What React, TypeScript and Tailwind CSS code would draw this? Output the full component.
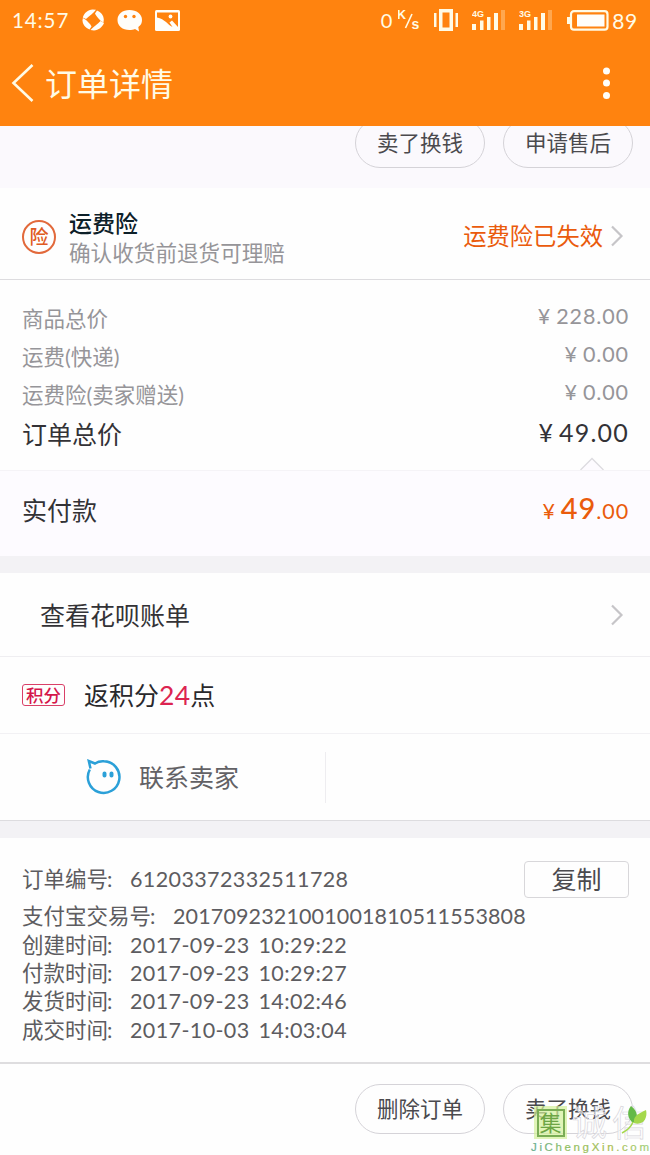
import type { ReactNode } from "react";

function Chevron() {
  return (
    <svg width="14" height="22" viewBox="0 0 14 22" fill="none" stroke="#c6c5c8" strokeWidth="2.2">
      <path d="M2 1.5 11.5 11 2 20.5" />
    </svg>
  );
}

function Signal({ label }: { label: string }) {
  return (
    <svg width="34" height="22" viewBox="0 0 34 22" fill="#fffbe6">
      <text x="0" y="8" fontSize="9" fontWeight="700" fontFamily="Liberation Sans, sans-serif" textLength="12">
        {label}
      </text>
      <rect x="0" y="15" width="4" height="6" />
      <rect x="8" y="11.500" width="3.5" height="9.500" />
      <rect x="15" y="8" width="3.5" height="13" />
      <rect x="22" y="4" width="4" height="17" />
      <rect x="29" y="1" width="4" height="20" opacity=".3" />
    </svg>
  );
}

function StatusBar() {
  return (
    <div className="flex h-10 items-center pl-3 text-[#fffbe6]">
      <span className="w-[57px] text-[20.500px] tracking-[0.900px]">14:57</span>
      <svg className="ml-[13px]" width="23" height="22" viewBox="0 0 23 22" fill="#fffefa">
        <path d="M.8 8.500C2 4 6 .8 10.500.5L14 .8C12 4 7 7 4 10Z" />
        <path d="M15 1.500c4 1.500 6.500 5 6.800 9l-.3 3C18 12 14.500 7.500 13 4.500Z" />
        <path d="M22 14c-1.500 4-5.500 7.300-10 7.500l-3.500-.4C11 18 16 15 18.500 12Z" />
        <path d="M7.500 20.500C3.500 19 .7 15.500.5 11.500l.4-2.500C4 10.500 8 14.500 9.500 17.500Z" />
      </svg>
      <svg className="ml-3" width="26" height="23" viewBox="0 0 26 23">
        <path d="M12.500 1C5.500 1 .5 5 .5 11s5 10 12 10c2 0 4-.3 5.500-1l4 2.500-.7-4.500C24 16 25 14 25 11 25 5 19.500 1 12.500 1Z" fill="#fffefa" />
        <circle cx="8.500" cy="7.500" r="1.700" fill="#ff830f" />
        <circle cx="17" cy="7.500" r="1.700" fill="#ff830f" />
      </svg>
      <svg className="ml-3" width="25" height="21" viewBox="0 0 25 21">
        <rect x="0" y="0" width="25" height="21" rx="1.500" fill="#fffefa" />
        <path d="M2 2.500h21v14.500l-6-6.500-2.500 2 3 4.500C13 15 10 9 2 7.500Z" fill="#ff830f" />
        <circle cx="15.500" cy="6.500" r="1.900" fill="#fffefa" />
      </svg>
      <span className="ml-auto text-[20px]">0</span>
      <svg className="ml-[6px]" width="24" height="24" viewBox="0 0 24 24" fill="#fffbe6" fontFamily="Liberation Sans, sans-serif" fontWeight="700">
        <text x="-1" y="10.500" fontSize="12.500">K</text>
        <path d="M7.500 20 14 6" stroke="#fffbe6" strokeWidth="1.600" />
        <text x="13.500" y="20.500" fontSize="14">s</text>
      </svg>
      <svg className="ml-[12px]" width="24" height="22" viewBox="0 0 24 22" fill="#fffbe6">
        <path d="M0 4h2.500v14H0zM21.500 4H24v14h-2.500zM5 0h14v22H5zM8.500 3.500v15h7v-15z" fillRule="evenodd" />
      </svg>
      <div className="ml-[14px] flex gap-[13px]">
        <Signal label="4G" />
        <Signal label="3G" />
      </div>
      <svg className="ml-[14px]" width="42" height="21" viewBox="0 0 42 21">
        <rect x="4" y="1.200" width="36.500" height="18.500" rx="3" fill="none" stroke="#fffbe6" strokeWidth="2.200" />
        <path d="M0 7h3v7H0z" fill="#fffbe6" />
        <rect x="10" y="4.500" width="27.500" height="12" fill="#fffefa" />
      </svg>
      <span className="ml-[3px] mr-[12px] text-[21px] tracking-[0.700px]">89</span>
    </div>
  );
}

function Pill({ children }: { children: ReactNode }) {
  return (
    <button className="h-[50px] w-[130px] shrink-0 rounded-full border border-[#d5d3d8] pt-[2px] text-[21.500px] text-[#4b4a4e]">
      {children}
    </button>
  );
}

function PriceRow({ label, value }: { label: string; value: string }) {
  return (
    <div className="flex h-[38px] items-center justify-between text-[21.500px] text-[#969599]">
      <span className="pt-[2px]">{label}</span>
      <span className="relative -top-[2px] flex tracking-[0.900px]">
        <span className="mr-[5px]">¥</span>
        {value}
      </span>
    </div>
  );
}

function InfoRow({ label, value, tight = false }: { label: string; value: string; tight?: boolean }) {
  return (
    <div className="flex h-[28.300px] items-center text-[21.500px] text-[#5d5c60]">
      <span>{label}</span>
      <span className="-ml-[1px] inline-block w-[23px]">:</span>
      <span className={tight ? "tracking-[0.130px]" : "tracking-[0.380px] [word-spacing:3px]"}>{value}</span>
    </div>
  );
}

export default function App() {
  return (
    <div className="flex h-[1155px] w-[650px] flex-col overflow-hidden bg-[#fefefe] font-[Lato,'Noto_Sans_CJK_SC',sans-serif] leading-none">
      <header className="h-[126px] shrink-0 bg-[#ff830f]">
        <StatusBar />
        <div className="flex h-[86px] items-center pl-[11px] text-[#fffbe6]">
          <svg width="24" height="40" viewBox="0 0 24 40" fill="none" stroke="#fffbe6" strokeWidth="2.600">
            <path d="M21.500 2 2.500 20l19 18" />
          </svg>
          <h1 className="ml-[10px] pt-px text-[32px]">订单详情</h1>
          <svg className="ml-auto mr-[39px]" width="9" height="34" viewBox="0 0 9 34" fill="#fffefa">
            <circle cx="4.500" cy="5" r="3.500" />
            <circle cx="4.500" cy="17" r="3.500" />
            <circle cx="4.500" cy="29.500" r="3.500" />
          </svg>
        </div>
      </header>

      <section className="flex h-[62px] shrink-0 items-end justify-end gap-[18px] overflow-hidden bg-[#fbf9fd] pb-5 pr-[17px]">
        <Pill>卖了换钱</Pill>
        <Pill>申请售后</Pill>
      </section>

      <section className="flex h-[92px] shrink-0 items-center border-b border-[#dddcdf] pl-[22px] pr-[26px]">
        <div className="mt-[6px] flex size-[34px] items-center justify-center rounded-full border-2 border-[#e2693b] text-[19px] font-medium text-[#e05a22]">
          险
        </div>
        <div className="ml-[13px] mt-[9px] flex flex-col gap-[8px]">
          <span className="text-[23px] font-medium text-[#0d2029]">运费险</span>
          <span className="text-[21.600px] text-[#969599]">确认收货前退货可理赔</span>
        </div>
        <span className="ml-auto mr-[7px] mt-[6px] text-[23.300px] text-[#ea5b0c]">运费险已失效</span>
        <span className="mt-1">
          <Chevron />
        </span>
      </section>

      <section className="relative h-[190px] shrink-0 pl-[22px] pr-[21px] pt-5">
        <PriceRow label="商品总价" value="228.00" />
        <PriceRow label="运费(快递)" value="0.00" />
        <PriceRow label="运费险(卖家赠送)" value="0.00" />
        <div className="flex h-10 items-center justify-between text-[25px] text-[#333236]">
          <span>订单总价</span>
          <span className="relative -top-[2px] flex tracking-[1.200px]">
            <span className="mr-[5px]">¥</span>49.00
          </span>
        </div>
        <svg className="absolute bottom-0 left-[580px]" width="24" height="13" viewBox="0 0 24 13" fill="#fdfbff" stroke="#dcdbdf" strokeWidth="1.300">
          <path d="M.5 13 12 1.500 23.500 13" />
        </svg>
      </section>

      <section className="flex h-[86px] shrink-0 items-center justify-between border-t border-[#f5f3f7] bg-[#fdfbff] pl-[22px] pr-[21px] text-[#333236]">
        <span className="relative -top-[3px] text-[25px]">实付款</span>
        <span className="relative -top-[6px] flex items-baseline text-[21.500px] tracking-[0.900px] text-[#ea5b0c]">
          <span className="mr-[5px]">¥</span>
          <span className="text-[29px] font-medium">49</span>.00
        </span>
      </section>

      <div className="h-[17px] shrink-0 bg-[#f3f2f5]" />

      <section className="flex h-[84px] shrink-0 items-center justify-between border-b border-[#efeef1] pl-[40px] pr-[26px] text-[25px] text-[#333236]">
        <span className="pt-[2px]">查看花呗账单</span>
        <Chevron />
      </section>

      <section className="flex h-[77px] shrink-0 items-center border-b border-[#f2f1f4] pl-[22px]">
        <span className="flex h-[22px] w-[43px] items-center justify-center rounded-[3px] border border-[#d94068] pt-px text-[17.500px] font-medium text-[#d5174b]">
          积分
        </span>
        <span className="ml-[19px] text-[25px] text-[#29282c]">
          返积分<span className="text-[26.500px] tracking-[0.300px] text-[#dc2450]">24</span>点
        </span>
      </section>

      <section className="flex h-[87px] shrink-0 items-center border-b border-[#dddcdf]">
        <div className="flex h-[51px] w-[326px] items-center border-r border-[#eeedf0] pl-[86px]">
          <svg width="36" height="36" viewBox="0 0 36 36" fill="none" stroke="#2ba0d8" strokeWidth="2.500">
            <path d="M4.500 9.500 2.800 2 9 4.500C12 2.600 15 2 18 2.300A15.800 15.800 0 1 1 3.800 10.500" />
            <path d="M18.500 14.500v2M25.500 14.500v2" strokeWidth="4" strokeLinecap="round" />
          </svg>
          <span className="ml-[17px] text-[25px] text-[#626165]">联系卖家</span>
        </div>
      </section>

      <div className="h-[17px] shrink-0 bg-[#f3f2f5]" />

      <section className="h-[224px] shrink-0 pl-[22px] pr-[21px] pt-[23px]">
        <div className="flex h-[37px] items-center justify-between">
          <InfoRow label="订单编号" value="61203372332511728" />
          <button className="h-[37px] w-[105px] rounded-[4px] border border-[#d8d7da] text-[25px] text-[#4b4a4e]">
            复制
          </button>
        </div>
        <div className="pt-[5px]">
          <InfoRow label="支付宝交易号" value="2017092321001001810511553808" tight />
          <InfoRow label="创建时间" value="2017-09-23 10:29:22" />
          <InfoRow label="付款时间" value="2017-09-23 10:29:27" />
          <InfoRow label="发货时间" value="2017-09-23 14:02:46" />
          <InfoRow label="成交时间" value="2017-10-03 14:03:04" />
        </div>
      </section>

      <footer className="relative flex h-[93px] shrink-0 items-start justify-end gap-[18px] border-t-2 border-[#dedddf] pr-[17px] pt-5">
        <Pill>删除订单</Pill>
        <Pill>卖了换钱</Pill>
        <div className="absolute left-[530px] top-[41px] w-[120px]">
          <div className="flex h-[35px] items-center">
            <span className="ml-[4px] flex size-[33px] shrink-0 items-center justify-center bg-[#d3ef9a]/70">
              <span className="flex size-[28px] items-center justify-center border-2 border-[#7aad55] text-[22px] text-[#6da545]">集</span>
            </span>
            <svg className="ml-[5px] shrink-0 overflow-visible" width="78" height="37" viewBox="0 0 78 37">
              <text x="0" y="32" fontSize="35" textLength="75" fill="#fff" fillOpacity=".6" stroke="#d8d6dc" strokeWidth=".7" fontFamily="Noto Sans CJK SC, sans-serif">
                诚信
              </text>
              <path d="M59 2C54 8 56 15 61 19c5-4 6-11-2-17Z" fill="#63b947" />
              <path d="M62 19c-1-6 3-9 12-13 2 8-3 16-12 13Z" fill="#a4d84c" />
              <path d="M61 18c-2 5-5 8-11 11" fill="none" stroke="#a4d84c" strokeWidth="1.500" />
            </svg>
          </div>
          <svg width="120" height="14" viewBox="0 0 120 14">
            <defs>
              <linearGradient id="site" x1="0" x2="1">
                <stop stopColor="#66ad92" />
                <stop offset=".3" stopColor="#8fbf63" />
                <stop offset=".7" stopColor="#a9bd52" />
                <stop offset="1" stopColor="#a2d07c" />
              </linearGradient>
            </defs>
            <text x="1" y="11" fontSize="11.500" textLength="118" fill="url(#site)" stroke="url(#site)" strokeWidth=".2" fontFamily="Liberation Sans, sans-serif">
              JiChengXin.com
            </text>
          </svg>
        </div>
      </footer>
    </div>
  );
}
